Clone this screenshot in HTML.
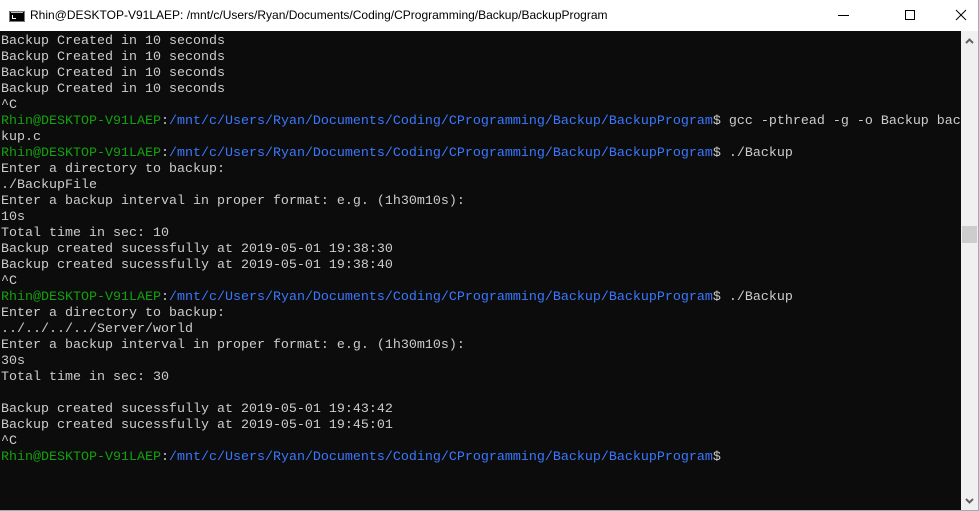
<!DOCTYPE html>
<html><head><meta charset="utf-8"><style>
html,body{margin:0;padding:0;width:979px;height:511px;overflow:hidden;background:#fff;}
#title{position:absolute;left:0;top:0;width:979px;height:31px;background:#fff;font-family:"Segoe UI","Liberation Sans",sans-serif;font-size:12px;color:#000;}
#title .t{position:absolute;left:30px;top:8px;white-space:nowrap;}
#icon{position:absolute;left:9px;top:11px;width:14px;height:9px;background:#000;border:1px solid #777;}
#icon:before{content:"";position:absolute;left:1px;top:0;width:12px;height:1px;background:#bbb;}
#icon span{position:absolute;left:2px;top:3px;width:3px;height:3px;border-left:1px solid #fff;border-bottom:1px solid #fff;}
#term{position:absolute;left:0;top:31px;width:961px;height:479px;background:#0c0c0c;overflow:hidden;}
pre{margin:0;padding:3px 0 0 1px;font-family:"Liberation Mono",monospace;font-size:13.33px;line-height:16px;color:#cccccc;}
.g{color:#13a10e}.b{color:#3b78ff}
#sb{position:absolute;left:961px;top:31px;width:17px;height:479px;background:#f0f0f0;}
#thumb{position:absolute;left:1px;top:195px;width:15px;height:17px;background:#cdcdcd;}
#rb{position:absolute;left:978px;top:0;width:1px;height:511px;background:#a0aab8;}
#bb{position:absolute;left:0;top:510px;width:979px;height:1px;background:#a0aab8;}
</style></head><body>
<div id="title"><div id="icon"><span></span></div><div class="t">Rhin@DESKTOP-V91LAEP: /mnt/c/Users/Ryan/Documents/Coding/CProgramming/Backup/BackupProgram</div>
<svg style="position:absolute;left:830px;top:0" width="149" height="31">
<line x1="8" y1="15.5" x2="19" y2="15.5" stroke="#000" stroke-width="1"/>
<rect x="75.5" y="10.5" width="9" height="9" fill="none" stroke="#000"/>
<line x1="126" y1="10" x2="136" y2="20" stroke="#000"/>
<line x1="136" y1="10" x2="126" y2="20" stroke="#000"/>
</svg></div>
<div id="term"><pre>Backup Created in 10 seconds
Backup Created in 10 seconds
Backup Created in 10 seconds
Backup Created in 10 seconds
^C
<span class="g">Rhin@DESKTOP-V91LAEP</span>:<span class="b">/mnt/c/Users/Ryan/Documents/Coding/CProgramming/Backup/BackupProgram</span>$ gcc -pthread -g -o Backup bac
kup.c
<span class="g">Rhin@DESKTOP-V91LAEP</span>:<span class="b">/mnt/c/Users/Ryan/Documents/Coding/CProgramming/Backup/BackupProgram</span>$ ./Backup
Enter a directory to backup:
./BackupFile
Enter a backup interval in proper format: e.g. (1h30m10s):
10s
Total time in sec: 10
Backup created sucessfully at 2019-05-01 19:38:30
Backup created sucessfully at 2019-05-01 19:38:40
^C
<span class="g">Rhin@DESKTOP-V91LAEP</span>:<span class="b">/mnt/c/Users/Ryan/Documents/Coding/CProgramming/Backup/BackupProgram</span>$ ./Backup
Enter a directory to backup:
../../../../Server/world
Enter a backup interval in proper format: e.g. (1h30m10s):
30s
Total time in sec: 30

Backup created sucessfully at 2019-05-01 19:43:42
Backup created sucessfully at 2019-05-01 19:45:01
^C
<span class="g">Rhin@DESKTOP-V91LAEP</span>:<span class="b">/mnt/c/Users/Ryan/Documents/Coding/CProgramming/Backup/BackupProgram</span>$</pre></div>
<div id="sb"><div id="thumb"></div>
<svg style="position:absolute;left:0;top:0" width="17" height="479">
<polyline points="5,12 8.5,8.5 12,12" fill="none" stroke="#606060" stroke-width="2"/>
<polyline points="5,468 8.5,471.5 12,468" fill="none" stroke="#606060" stroke-width="2"/>
</svg></div>
<div id="rb"></div><div id="bb"></div>
</body></html>
